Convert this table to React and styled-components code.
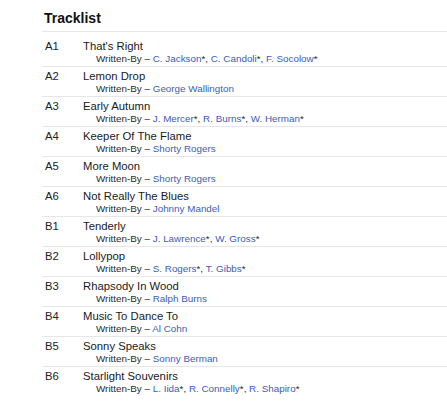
import React from 'react';
import styled, { createGlobalStyle } from 'styled-components';

const tracks = [
  { pos: 'A1', title: "That's Right", credits: [['C. Jackson', true], ['C. Candoli', true], ['F. Socolow', true]] },
  { pos: 'A2', title: 'Lemon Drop', credits: [['George Wallington', false]] },
  { pos: 'A3', title: 'Early Autumn', credits: [['J. Mercer', true], ['R. Burns', true], ['W. Herman', true]] },
  { pos: 'A4', title: 'Keeper Of The Flame', credits: [['Shorty Rogers', false]] },
  { pos: 'A5', title: 'More Moon', credits: [['Shorty Rogers', false]] },
  { pos: 'A6', title: 'Not Really The Blues', credits: [['Johnny Mandel', false]] },
  { pos: 'B1', title: 'Tenderly', credits: [['J. Lawrence', true], ['W. Gross', true]] },
  { pos: 'B2', title: 'Lollypop', credits: [['S. Rogers', true], ['T. Gibbs', true]] },
  { pos: 'B3', title: 'Rhapsody In Wood', credits: [['Ralph Burns', false]] },
  { pos: 'B4', title: 'Music To Dance To', credits: [['Al Cohn', false]] },
  { pos: 'B5', title: 'Sonny Speaks', credits: [['Sonny Berman', false]] },
  { pos: 'B6', title: 'Starlight Souvenirs', credits: [['L. Iida', true], ['R. Connelly', true], ['R. Shapiro', true]] },
];

const GlobalStyle = createGlobalStyle`
  body {
    margin: 0;
    background: #fff;
    font-family: "Liberation Sans", Arial, sans-serif;
    color: #1c1c1c;
  }
`;

const Section = styled.section`
  padding-left: 42px;
  padding-top: 10px;
`;

const Heading = styled.h3`
  margin: 0 0 4px 0;
  padding: 0 0 4px 2px;
  font-size: 14px;
  line-height: 17px;
  font-weight: bold;
  color: #111;
  border-bottom: 1px solid #e6e6e6;
`;

const Row = styled.div`
  display: flex;
  border-top: 1px solid ${(p) => (p.first ? 'transparent' : '#e6e6e6')};
  padding: 2px 0 1px 0;
`;

const Position = styled.div`
  width: 38px;
  padding-left: 3px;
  flex-shrink: 0;
  font-size: 11.3px;
  line-height: 14px;
  color: #222;
`;

const TrackInfo = styled.div`
  display: flex;
  flex-direction: column;
`;

const Title = styled.span`
  font-size: 11.3px;
  line-height: 14px;
  color: #1a1a1a;
`;

const Credits = styled.div`
  padding-left: 13px;
  font-size: 9.85px;
  line-height: 12px;
  color: #2a2a2a;
  white-space: nowrap;
`;

const Artist = styled.a`
  color: #3d5cb8;
  text-decoration: none;
`;

const App = () => (
  <>
    <GlobalStyle />
    <Section>
      <Heading>Tracklist</Heading>
      {tracks.map((t, i) => (
        <Row key={t.pos} first={i === 0}>
          <Position>{t.pos}</Position>
          <TrackInfo>
            <Title>{t.title}</Title>
            <Credits>
              Written-By –{' '}
              {t.credits.map(([name, anv], j) => (
                <React.Fragment key={name}>
                  {j > 0 && ', '}
                  <Artist href="#">{name}</Artist>
                  {anv && '*'}
                </React.Fragment>
              ))}
            </Credits>
          </TrackInfo>
        </Row>
      ))}
    </Section>
  </>
);

export default App;
